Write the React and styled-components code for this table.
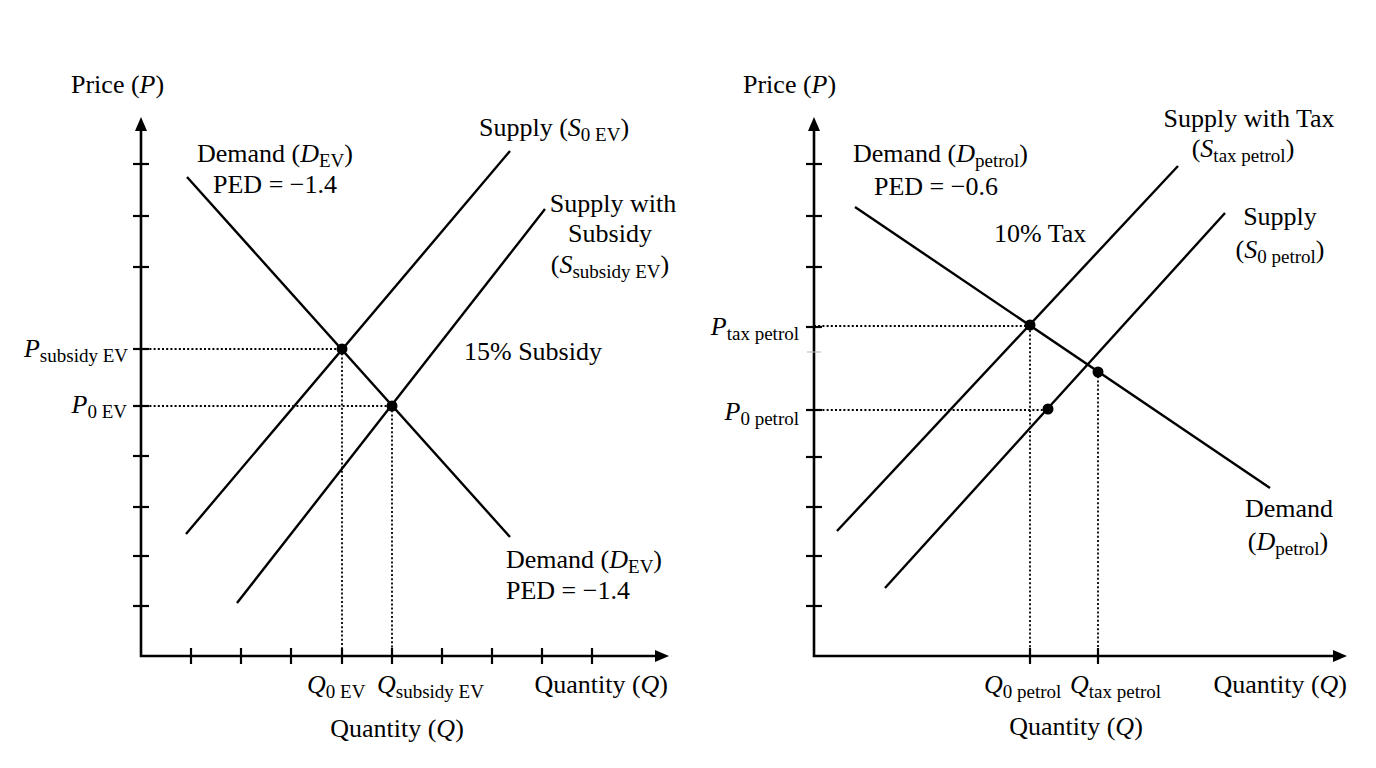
import React from "react";
import styled, { createGlobalStyle } from "styled-components";

const GlobalStyle = createGlobalStyle`
  html, body {
    margin: 0;
    padding: 0;
    background: #fff;
  }
`;

const Page = styled.main`
  display: flex;
  width: 1376px;
  height: 768px;
  background: #fff;
  overflow: hidden;
`;

const Panel = styled.svg`
  display: block;
  width: 688px;
  height: 768px;
  flex: 0 0 688px;
`;

const Label = styled.text`
  font-family: "Liberation Serif", "Times New Roman", serif;
  font-size: 26px;
  fill: #000;
`;

const Sub = styled.tspan`
  font-size: 19px;
`;

const It = styled.tspan`
  font-style: italic;
`;

const Curve = styled.line`
  stroke: #000;
  stroke-width: 2.4;
  stroke-linecap: butt;
`;

const Guide = styled.line`
  stroke: #000;
  stroke-width: 1.8;
  stroke-dasharray: 2 2.2;
`;

const AxisLine = styled.path`
  stroke: #000;
  stroke-width: 2.6;
  fill: none;
`;

const Arrow = styled.path`
  fill: #000;
`;

const Tick = styled.line`
  stroke: ${(p) => (p.faint ? "#b5b5b5" : "#000")};
  stroke-width: ${(p) => (p.faint ? 1 : 2.2)};
`;

const Dot = styled.circle`
  fill: #000;
`;

// little helper: symbol with a subscript, e.g. P_{0 EV}
const Sym = ({ s, sub, close }) => (
  <>
    <It>{s}</It>
    <Sub dy="5">{sub}</Sub>
    {close && <tspan dy="-5">{close}</tspan>}
  </>
);

const Axes = ({ ox, oy, top, right, yTicks, xTicks, faint = [] }) => (
  <g>
    <AxisLine d={`M${ox} ${top + 11} L${ox} ${oy} L${right - 11} ${oy}`} />
    <Arrow d={`M${ox} ${top} L${ox - 6} ${top + 14} L${ox + 6} ${top + 14} Z`} />
    <Arrow d={`M${right} ${oy} L${right - 14} ${oy - 6} L${right - 14} ${oy + 6} Z`} />
    {yTicks.map((y) => (
      <Tick key={"y" + y} x1={ox - 8} x2={ox + 8} y1={y} y2={y} />
    ))}
    {faint.map((y) => (
      <Tick key={"f" + y} faint x1={ox - 7} x2={ox + 7} y1={y} y2={y} />
    ))}
    {xTicks.map((x) => (
      <Tick key={"x" + x} x1={x} x2={x} y1={oy - 8} y2={oy + 8} />
    ))}
  </g>
);

const SubsidyChart = () => (
  <Panel viewBox="0 0 688 768">
    <Axes
      ox={141}
      oy={656}
      top={117}
      right={669}
      yTicks={[164, 216, 267, 349, 406, 456, 507, 556, 606]}
      xTicks={[191, 241, 291, 342, 392, 442, 492, 542, 592]}
    />

    <Guide x1={141} y1={349} x2={342} y2={349} />
    <Guide x1={141} y1={406} x2={392} y2={406} />
    <Guide x1={342} y1={349} x2={342} y2={656} />
    <Guide x1={392} y1={406} x2={392} y2={656} />

    <Curve x1={187} y1={177} x2={510} y2={537} />
    <Curve x1={186} y1={534} x2={510} y2={151} />
    <Curve x1={237} y1={603} x2={545} y2={209} />

    <Dot cx={342} cy={349} r={5.5} />
    <Dot cx={392} cy={406} r={5.5} />

    <Label x={71} y={93}>
      Price (<It>P</It>)
    </Label>
    <Label x={479} y={136}>
      Supply (<Sym s="S" sub="0 EV" close=")" />
    </Label>
    <Label x={275} y={162} textAnchor="middle">
      Demand (<Sym s="D" sub="EV" close=")" />
    </Label>
    <Label x={275} y={193} textAnchor="middle">
      PED = −1.4
    </Label>
    <Label x={613} y={212} textAnchor="middle">
      Supply with
    </Label>
    <Label x={610} y={242} textAnchor="middle">
      Subsidy
    </Label>
    <Label x={610} y={273} textAnchor="middle">
      (<Sym s="S" sub="subsidy EV" close=")" />
    </Label>
    <Label x={464} y={360}>
      15% Subsidy
    </Label>
    <Label x={128} y={357} textAnchor="end">
      <Sym s="P" sub="subsidy EV" />
    </Label>
    <Label x={127} y={413} textAnchor="end">
      <Sym s="P" sub="0 EV" />
    </Label>
    <Label x={506} y={568}>
      Demand (<Sym s="D" sub="EV" close=")" />
    </Label>
    <Label x={506} y={599}>
      PED = −1.4
    </Label>
    <Label x={307} y={693}>
      <Sym s="Q" sub="0 EV" />
    </Label>
    <Label x={377} y={693}>
      <Sym s="Q" sub="subsidy EV" />
    </Label>
    <Label x={668} y={693} textAnchor="end">
      Quantity (<It>Q</It>)
    </Label>
    <Label x={397} y={737} textAnchor="middle">
      Quantity (<It>Q</It>)
    </Label>
  </Panel>
);

const TaxChart = () => (
  <Panel viewBox="688 0 688 768">
    <Axes
      ox={814}
      oy={656}
      top={117}
      right={1347}
      yTicks={[164, 216, 267, 327, 410, 457, 507, 556, 606]}
      xTicks={[1030, 1098]}
      faint={[352]}
    />

    <Guide x1={814} y1={326} x2={1030} y2={326} />
    <Guide x1={814} y1={410} x2={1048} y2={410} />
    <Guide x1={1030} y1={326} x2={1030} y2={656} />
    <Guide x1={1098} y1={372} x2={1098} y2={656} />

    <Curve x1={855} y1={207} x2={1270} y2={488} />
    <Curve x1={837} y1={531} x2={1178} y2={166} />
    <Curve x1={885} y1={588} x2={1225} y2={213} />

    <Dot cx={1030} cy={325} r={5.5} />
    <Dot cx={1098} cy={372} r={5.5} />
    <Dot cx={1048} cy={409} r={5.5} />

    <Label x={743} y={93}>
      Price (<It>P</It>)
    </Label>
    <Label x={1249} y={127} textAnchor="middle">
      Supply with Tax
    </Label>
    <Label x={1243} y={157} textAnchor="middle">
      (<Sym s="S" sub="tax petrol" close=")" />
    </Label>
    <Label x={853} y={162}>
      Demand (<Sym s="D" sub="petrol" close=")" />
    </Label>
    <Label x={874} y={195}>
      PED = −0.6
    </Label>
    <Label x={994} y={242}>
      10% Tax
    </Label>
    <Label x={1280} y={225} textAnchor="middle">
      Supply
    </Label>
    <Label x={1280} y={258} textAnchor="middle">
      (<Sym s="S" sub="0 petrol" close=")" />
    </Label>
    <Label x={799} y={335} textAnchor="end">
      <Sym s="P" sub="tax petrol" />
    </Label>
    <Label x={799} y={420} textAnchor="end">
      <Sym s="P" sub="0 petrol" />
    </Label>
    <Label x={1289} y={517} textAnchor="middle">
      Demand
    </Label>
    <Label x={1288} y={550} textAnchor="middle">
      (<Sym s="D" sub="petrol" close=")" />
    </Label>
    <Label x={984} y={693}>
      <Sym s="Q" sub="0 petrol" />
    </Label>
    <Label x={1070} y={693}>
      <Sym s="Q" sub="tax petrol" />
    </Label>
    <Label x={1347} y={693} textAnchor="end">
      Quantity (<It>Q</It>)
    </Label>
    <Label x={1076} y={735} textAnchor="middle">
      Quantity (<It>Q</It>)
    </Label>
  </Panel>
);

const App = () => {
  return (
    <>
      <GlobalStyle />
      <Page>
        <SubsidyChart />
        <TaxChart />
      </Page>
    </>
  );
};

export default App;
